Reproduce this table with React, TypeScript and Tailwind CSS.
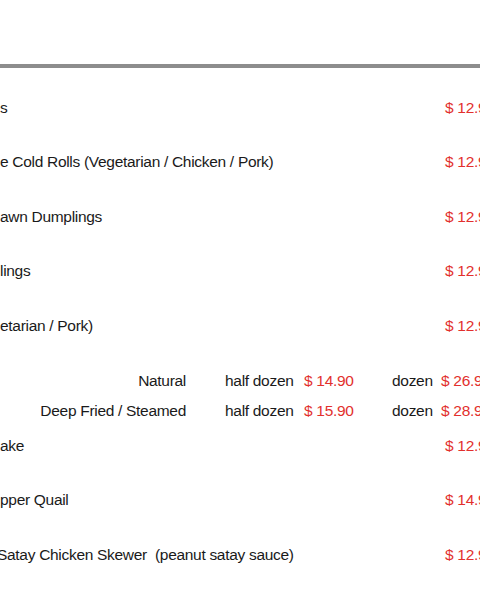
const font = { fontFamily: '"Liberation Sans", Arial, sans-serif' };

type Row = { name: string; price: string; shift?: string };

const top: Row[] = [
  { name: "s", price: "$ 12.90" },
  { name: "e Cold Rolls (Vegetarian / Chicken / Pork)", price: "$ 12.90" },
  { name: "awn Dumplings", price: "$ 12.90" },
  { name: "lings", price: "$ 12.90" },
  { name: "etarian / Pork)", price: "$ 12.90" },
];

const bottom: Row[] = [
  { name: "ake", price: "$ 12.90" },
  { name: "pper Quail", price: "$ 14.90" },
  { name: "Satay Chicken Skewer  (peanut satay sauce)", price: "$ 12.90", shift: "-ml-[3px]" },
];

function MenuRow({ row }: { row: Row }) {
  return (
    <div className="flex h-[54.5px] items-center">
      <span className={`flex-1 whitespace-pre text-[#1a1a1a] ${row.shift ?? ""}`}>{row.name}</span>
      <span className="w-[35px] shrink-0 whitespace-nowrap text-[#e2302d]">{row.price}</span>
    </div>
  );
}

function OysterLine({ label, half, dozen }: { label: string; half: string; dozen: string }) {
  return (
    <div className="flex h-[30px] items-center whitespace-nowrap">
      <span className="w-[186px] shrink-0 text-right text-[#1a1a1a]">{label}</span>
      <span className="ml-[39px] w-[79px] shrink-0 text-[#1a1a1a]">half dozen</span>
      <span className="w-[88px] shrink-0 text-[#e2302d]">{half}</span>
      <span className="w-[49px] shrink-0 text-[#1a1a1a]">dozen</span>
      <span className="shrink-0 text-[#e2302d]">{dozen}</span>
    </div>
  );
}

export default function App() {
  return (
    <div className="h-[600px] w-[480px] overflow-hidden bg-white text-[15.5px] tracking-[-0.3px]" style={font}>
      <div className="h-[64px]" />
      <div className="h-[4px] bg-[#8d8d8d]" />
      <div className="flex flex-col pt-[12px]">
        {top.map((r) => (
          <MenuRow key={r.name} row={r} />
        ))}
        <div className="h-[65.5px] pt-[12.75px]">
          <OysterLine label="Natural" half="$ 14.90" dozen="$ 26.90" />
          <OysterLine label="Deep Fried / Steamed" half="$ 15.90" dozen="$ 28.90" />
        </div>
        {bottom.map((r) => (
          <MenuRow key={r.name} row={r} />
        ))}
      </div>
    </div>
  );
}
